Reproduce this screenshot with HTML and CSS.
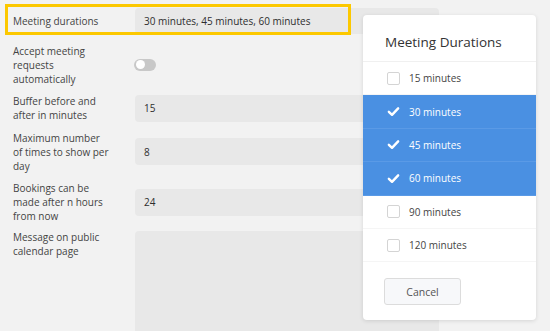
FILE: index.html
```html
<!DOCTYPE html>
<html>
<head>
<meta charset="utf-8">
<link rel="stylesheet" href="styles.css">
</head>
<body>
<div class="page">
  <div class="form">
    <div class="row row-first">
      <div class="label">Meeting durations</div>
      <div class="input">30 minutes, 45 minutes, 60 minutes</div>
    </div>
    <div class="row">
      <div class="label">Accept meeting<br>requests<br>automatically</div>
      <div class="toggle"><span class="knob"></span></div>
    </div>
    <div class="row">
      <div class="label">Buffer before and<br>after in minutes</div>
      <div class="input">15</div>
    </div>
    <div class="row">
      <div class="label">Maximum number<br>of times to show per<br>day</div>
      <div class="input">8</div>
    </div>
    <div class="row">
      <div class="label">Bookings can be<br>made after n hours<br>from now</div>
      <div class="input">24</div>
    </div>
    <div class="row row-top">
      <div class="label">Message on public<br>calendar page</div>
      <div class="textarea"></div>
    </div>
  </div>

  <div class="highlight"></div>

  <div class="popup">
    <div class="popup-head">Meeting Durations</div>
    <ul class="options">
      <li class="option"><span class="box"></span>15 minutes</li>
      <li class="option selected"><svg class="check" viewBox="0 0 14 14"><path d="M2 7.4 L5.4 10.6 L12 3.6"/></svg>30 minutes</li>
      <li class="option selected"><svg class="check" viewBox="0 0 14 14"><path d="M2 7.4 L5.4 10.6 L12 3.6"/></svg>45 minutes</li>
      <li class="option selected"><svg class="check" viewBox="0 0 14 14"><path d="M2 7.4 L5.4 10.6 L12 3.6"/></svg>60 minutes</li>
      <li class="option"><span class="box"></span>90 minutes</li>
      <li class="option"><span class="box"></span>120 minutes</li>
    </ul>
    <div class="popup-foot"><button class="btn">Cancel</button></div>
  </div>
</div>
</body>
</html>
```

FILE: styles.css
```css
html, body {
  margin: 0;
  padding: 0;
  background: #f2f2f2;
  font-family: "Open Sans", "Noto Sans", sans-serif;
  font-size: 10px;
  color: #444;
  overflow: hidden;
}

.page {
  position: relative;
  width: 550px;
  height: 331px;
}

.form {
  display: flex;
  flex-direction: column;
  gap: 8.5px;
  padding: 7px 0 0 13px;
}

.row {
  display: flex;
  align-items: center;
}

.row-first {
  height: 28px;
}

.row-top {
  align-items: flex-start;
  margin-top: -1px;
}

.label {
  width: 122px;
  flex: none;
  line-height: 14px;
  color: #444;
}

.row-top .label {
  margin-top: -1px;
}

.input {
  width: 295px;
  height: 27px;
  padding-left: 9px;
  background: #e8e8e8;
  border-radius: 4px;
  display: flex;
  align-items: center;
  color: #2e2e2e;
}

.row-first .input {
  height: 26px;
}

.textarea {
  width: 304px;
  height: 110px;
  background: #e8e8e8;
  border-radius: 4px;
}

.toggle {
  width: 22px;
  height: 12px;
  border-radius: 6px;
  background: #c8c8c8;
  position: relative;
  margin-left: -1px;
}

.knob {
  position: absolute;
  left: 2px;
  top: 1.5px;
  width: 9px;
  height: 9px;
  border-radius: 50%;
  background: #fff;
}

.highlight {
  position: absolute;
  left: 5px;
  top: 4px;
  width: 346px;
  height: 31px;
  box-sizing: border-box;
  border: 3px solid #fcc800;
}

.popup {
  position: absolute;
  left: 363px;
  top: 15px;
  width: 173px;
  height: 305px;
  background: #fff;
  border-radius: 4px;
  box-shadow: 0 1px 4px rgba(0, 0, 0, 0.12);
  display: flex;
  flex-direction: column;
}

.popup-head {
  padding: 18px 0 10px 22px;
  line-height: 18px;
  font-size: 13.5px;
  color: #333;
  border-bottom: 1px solid #f0f0f0;
}

.options {
  list-style: none;
  margin: 0;
  padding: 0;
}

.option {
  height: 33.4px;
  box-sizing: border-box;
  display: flex;
  align-items: center;
  padding-left: 24px;
  gap: 9px;
  color: #444;
  border-bottom: 1px solid #f5f5f5;
}

.option.selected {
  background: #4a90e2;
  color: #fff;
  border-bottom-color: #5a9ae6;
}

.box {
  width: 13px;
  height: 13px;
  box-sizing: border-box;
  border: 1px solid #d4d4d4;
  border-radius: 2px;
  background: #fff;
}

.check {
  width: 13px;
  height: 13px;
  fill: none;
  stroke: #fff;
  stroke-width: 2.6;
  stroke-linecap: round;
  stroke-linejoin: round;
}

.popup-foot {
  padding: 16px 0 0 21px;
}

.btn {
  width: 77px;
  height: 27px;
  background: #f7f8fa;
  border: 1px solid #dcdcdc;
  border-radius: 3px;
  font-family: "Open Sans", "Noto Sans", sans-serif;
  font-size: 10.5px;
  color: #555;
  padding: 0;
}
```
